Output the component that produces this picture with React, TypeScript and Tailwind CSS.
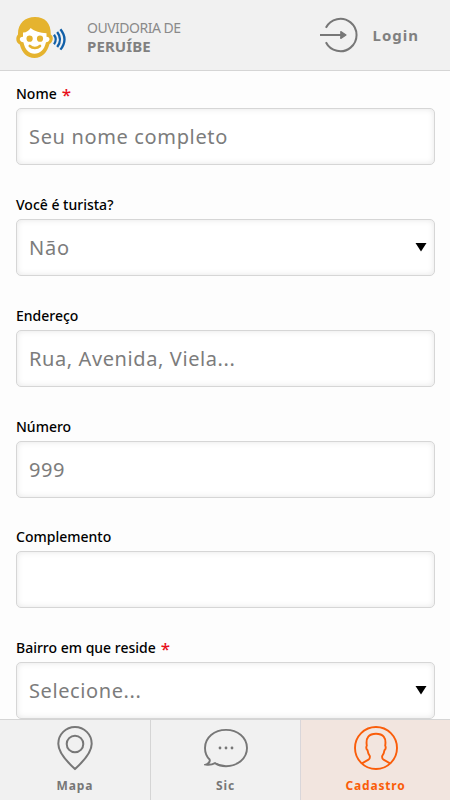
import React from "react";

type FieldProps = {
  label: string;
  value: string;
  required?: boolean;
  select?: boolean;
  valueClass?: string;
  className?: string;
};

function Field({
  label,
  value,
  required,
  select,
  valueClass = "tracking-[0.8px]",
  className = "h-[111px]",
}: FieldProps) {
  return (
    <div className={`shrink-0 ${className}`}>
      <div className="flex h-[25px] items-start text-[14px] leading-[22px] font-medium text-black">
        <span className="whitespace-nowrap">{label}</span>
        {required && <span className="ml-[5px] text-[17px] leading-[23px] text-[#e8101c]">*</span>}
      </div>
      <div className="flex h-[57px] items-center justify-between rounded-[5px] border border-[#d6d6d6] bg-white pr-[7px] pl-[12px] shadow-[inset_0_0_6px_rgba(0,0,0,0.10)]">
        <span className={`pt-px whitespace-pre text-[20px] leading-[28px] text-[#7c7c7c] ${valueClass}`}>
          {value}
        </span>
        {select && (
          <svg width="12" height="9" viewBox="0 0 12 9" fill="#000">
            <path d="M.5 0h11L6 8.6z" />
          </svg>
        )}
      </div>
    </div>
  );
}

function Logo() {
  return (
    <svg width="52" height="42" viewBox="0 0 52 42" className="shrink-0">
      <path
        d="M2 17.5C1.500 7 8.500 0 19 0c10.500 0 16 6.500 15.800 17.500C37.500 19 37.700 24.500 33.500 27c-2.300 8.500-7.500 14-15 14S6 36 3.800 27.500C-.5 25.500-.5 20 2 17.500Z"
        fill="#e5b32f"
      />
      <path
        d="M7 15.500c3 .3 5.300-1.500 7.700-4.500 4 3.500 9.500 4.700 15.800 5.200v3.600c2 .2 3.200 1.200 3 2.700-.3 1.700-1.700 2.600-3.500 2.700-1.600 7.400-6 11.500-11.500 11.500S9 32.600 7.400 25.200c-1.900-.1-3.300-1-3.600-2.700-.2-1.500 1-2.500 3.200-2.700Z"
        fill="#fff"
      />
      <circle cx="13.600" cy="21.700" r="3.100" fill="#e5b32f" />
      <circle cx="24" cy="21.700" r="3.100" fill="#e5b32f" />
      <path d="M13.800 29c2.800 2.600 7.400 2.600 10.200 0" fill="none" stroke="#e5b32f" strokeWidth="2.600" strokeLinecap="round" />
      <g fill="none" stroke="#1260a8" strokeWidth="2.300">
        <path d="M38 17.800c2.200 3 2.200 6.400 0 9.400" />
        <path d="M41.200 15c3.600 4.800 3.600 10.200 0 15" />
        <path d="M44.400 12.200c5.200 6.500 5.200 13.900 0 20.400" />
      </g>
    </svg>
  );
}

function LoginIcon() {
  return (
    <svg width="38" height="36" viewBox="0 0 38 36" fill="none" stroke="#777" strokeWidth="2" className="shrink-0">
      <path d="M5.900 10.700A16.200 16.200 0 1 1 5.900 25.300" />
      <path d="M0 18h21" />
      <path d="M20.800 14.600 26 18l-5.200 3.400z" fill="#777" strokeWidth="1.200" strokeLinejoin="round" />
    </svg>
  );
}

function PinIcon() {
  return (
    <svg width="44" height="46" viewBox="0 0 44 46" fill="none" stroke="#777" strokeWidth="2">
      <path d="M22 44C17 39.500 5.300 29 5.300 18.700a16.700 16.700 0 0 1 33.400 0C38.700 29 27 39.500 22 44Z" />
      <circle cx="22" cy="19" r="8.300" />
    </svg>
  );
}

function ChatIcon() {
  return (
    <svg width="44" height="46" viewBox="0 0 44 46" fill="none" stroke="#777" strokeWidth="1.900">
      <path d="M5.600 34.500C2.600 31.600 1 27.400 1 23 1 12.700 10.300 4.900 22 4.900S43 12.700 43 23s-9.300 18.200-21 18.200c-4 0-7.800-1-11-3.100-2.800 1.600-5.800 2-9.100 1.500 2.400-1 4.700-2.200 3.700-5.100Z" />
      <g fill="#777" stroke="none">
        <circle cx="16" cy="23" r="1.400" />
        <circle cx="22" cy="23" r="1.400" />
        <circle cx="28" cy="23" r="1.400" />
      </g>
    </svg>
  );
}

function UserIcon() {
  return (
    <svg width="44" height="46" viewBox="0 0 44 46" fill="none" stroke="#fa5d0a" strokeWidth="1.900">
      <circle cx="22" cy="23" r="21" />
      <path d="m8 38.300 6.500-3.600c1.300-.7 1.600-1.700 1.300-3.700-1.300-1.700-2-3.600-2.300-5.800-1.200-1.100-1.300-3.300-.7-4.500C11.500 12.500 15 8.800 22 8.800s10.500 3.700 9.200 11.900c.6 1.200.5 3.400-.7 4.500-.3 2.200-1 4.100-2.300 5.800-.3 2 0 3 1.300 3.700l6.500 3.600" />
    </svg>
  );
}

export default function App() {
  return (
    <div className="flex h-[800px] w-[450px] flex-col overflow-hidden bg-[#fdfdfd] font-['Noto_Sans','Open_Sans',sans-serif]">
      <header className="flex h-[71px] shrink-0 items-center border-b border-[#d5d5d5] bg-[#f1f1f1] pl-[16px] text-[#808080]">
        <div className="pt-[5px]">
          <Logo />
        </div>
        <div className="ml-[19px] pt-[4px]">
          <div className="text-[14px] leading-[18px] tracking-[-0.5px] text-[#8a8a8a]">OUVIDORIA DE</div>
          <div className="text-[15px] leading-[18px] font-bold tracking-[0.1px]">PERUÍBE</div>
        </div>
        <button className="mr-[31px] ml-auto flex items-center gap-[15px]">
          <LoginIcon />
          <span className="text-[15px] leading-[22px] font-bold tracking-[1px]">Login</span>
        </button>
      </header>

      <main className="flex min-h-0 grow flex-col overflow-hidden pt-[12px] pr-[15px] pl-[16px]">
        <Field label="Nome" value="Seu nome completo" required valueClass="tracking-[0.65px]" />
        <Field label="Você é turista?" value="Não" select />
        <Field label="Endereço" value="Rua, Avenida, Viela..." valueClass="tracking-[0.6px]" />
        <Field label="Número" value="999" className="h-[110px]" valueClass="tracking-[0.5px]" />
        <Field label="Complemento" value="" />
        <Field label="Bairro em que reside" value="Selecione..." required select valueClass="tracking-[0.6px]" />
      </main>

      <nav className="grid h-[81px] shrink-0 grid-cols-3 border-t border-[#d5d5d5] bg-[#f1f1f1] text-[12px] leading-[18px] font-bold text-[#777]">
        <div className="flex flex-col items-center pt-[5px]">
          <PinIcon />
          <span className="mt-[6px] tracking-[0.9px]">Mapa</span>
        </div>
        <div className="flex flex-col items-center border-l border-[#d5d5d5] pt-[5px]">
          <ChatIcon />
          <span className="mt-[6px] tracking-[0.9px]">Sic</span>
        </div>
        <div className="flex flex-col items-center border-l border-[#d9d6da] bg-[#f2e5df] pt-[5px] text-[#fa5d0a]">
          <UserIcon />
          <span className="mt-[6px] tracking-[0.8px]">Cadastro</span>
        </div>
      </nav>
    </div>
  );
}
